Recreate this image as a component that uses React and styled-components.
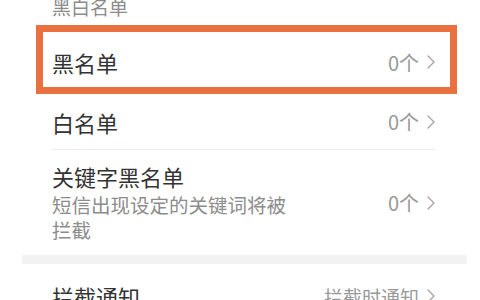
import React from "react";
import styled, { createGlobalStyle } from "styled-components";

const GlobalStyle = createGlobalStyle`
  body {
    margin: 0;
    background: #ffffff;
    font-family: "Noto Sans CJK SC", "Noto Sans", sans-serif;
    overflow: hidden;
  }
`;

const items = [
    { id: "black", title: "黑名单", value: "0个", highlighted: true },
    { id: "white", title: "白名单", value: "0个", divider: true },
    {
        id: "keyword",
        title: "关键字黑名单",
        desc: "短信出现设定的关键词将被拦截",
        value: "0个",
    },
];

function Chevron() {
    return (
        <ChevronSvg viewBox="0 0 8 14" width="8" height="14">
            <path d="M1 1 L7 7 L1 13" fill="none" stroke="#a6a6a6" strokeWidth="1.4" strokeLinecap="round" strokeLinejoin="round" />
        </ChevronSvg>
    );
}

function Row({ item }) {
    const content = (
        <RowStyled $tall={!!item.desc} $divider={item.divider}>
            <TextBlock>
                <RowTitle>{item.title}</RowTitle>
                {item.desc && <RowDesc>{item.desc}</RowDesc>}
            </TextBlock>
            <ValueStyled>
                {item.value}
                <Chevron />
            </ValueStyled>
        </RowStyled>
    );

    if (item.highlighted) {
        return <HighlightStyled>{content}</HighlightStyled>;
    }
    return <PlainRow>{content}</PlainRow>;
}

function App() {
    return (
        <ContainerStyled>
            <GlobalStyle />
            <SectionTitle>黑白名单</SectionTitle>

            {items.map((item) => (
                <Row key={item.id} item={item} />
            ))}

            <GapBand />

            <PlainRow>
                <RowStyled $compact>
                    <RowTitle>拦截通知</RowTitle>
                    <ValueStyled $wide>
                        拦截时通知
                        <Chevron />
                    </ValueStyled>
                </RowStyled>
            </PlainRow>
        </ContainerStyled>
    );
}

const ContainerStyled = styled.div`
    width: 480px;
    height: 300px;
    overflow: hidden;
    background: #ffffff;
`;

const SectionTitle = styled.div`
    margin-top: -4px;
    height: 29px;
    padding-left: 52px;
    font-size: 19px;
    line-height: 22px;
    color: #8c8c8c;
`;

const HighlightStyled = styled.div`
    margin-left: 36px;
    width: 383px;
    height: 55px;
    border: 7px solid #e9703f;
    padding: 0 15px 0 9px;
    box-sizing: content-box;
    display: flex;
    align-items: center;
    & > div {
        flex: 1;
        padding-top: 5px;
    }
`;

const PlainRow = styled.div`
    padding: 0 45px 0 52px;
`;

const RowStyled = styled.div`
    display: flex;
    align-items: center;
    justify-content: space-between;
    height: ${(p) => (p.$tall ? "105px" : p.$compact ? "64px" : "55px")};
    border-bottom: ${(p) => (p.$divider ? "1px solid #ececec" : "none")};
    box-sizing: content-box;
`;

const TextBlock = styled.div`
    display: flex;
    flex-direction: column;
    gap: 3px;
`;

const RowTitle = styled.div`
    font-size: 22px;
    line-height: 26px;
    color: #333333;
`;

const RowDesc = styled.div`
    max-width: 245px;
    font-size: 19.5px;
    line-height: 25px;
    color: #8c8c8c;
`;

const ValueStyled = styled.div`
    display: flex;
    align-items: center;
    gap: 8px;
    font-size: ${(p) => (p.$wide ? "19px" : "20px")};
    color: #999999;
    white-space: nowrap;
`;

const ChevronSvg = styled.svg`
    display: block;
    flex-shrink: 0;
`;

const GapBand = styled.div`
    margin: 0 13px 0 22px;
    height: 9px;
    border-radius: 2px;
    background: #f2f2f2;
`;

export default App;
